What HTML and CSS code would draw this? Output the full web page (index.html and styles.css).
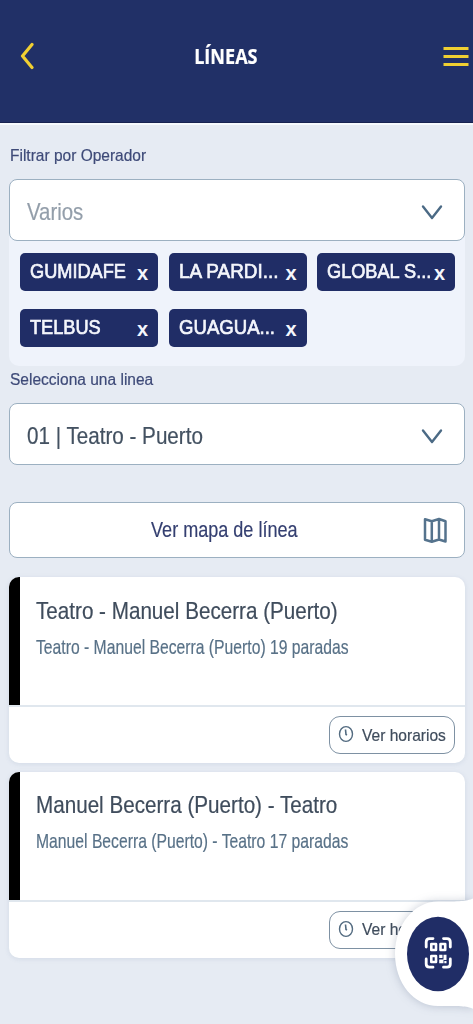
FILE: index.html
```html
<!DOCTYPE html>
<html lang="es">
<head>
<meta charset="utf-8">
<title>Líneas</title>
<link rel="stylesheet" href="styles.css">
</head>
<body>
<header class="header">
  <svg class="back" width="14" height="28" viewBox="0 0 14 28"><path d="M12 2.500 2.500 14 12 25.500" fill="none" stroke="#f0cf32" stroke-width="3.200" stroke-linecap="round" stroke-linejoin="round"/></svg>
  <h1 class="title"><span class="t t-head">LÍNEAS</span></h1>
  <svg class="menu" width="26" height="22" viewBox="0 0 26 22"><path d="M.5 3.500H25.500M.5 11.500H25.500M.5 19.500H25.500" stroke="#f0cf32" stroke-width="3.200"/></svg>
</header>
<main class="main">
  <div class="label"><span class="t t-filter">Filtrar por Operador</span></div>
  <div class="panel">
    <div class="select placeholder">
      <span class="t t-varios">Varios</span>
      <svg width="22" height="16" viewBox="0 0 22 16"><path d="M2 2.500 11 14 20 2.500" fill="none" stroke="#4b6a85" stroke-width="2.400" stroke-linecap="round" stroke-linejoin="round"/></svg>
    </div>
    <div class="chips">
      <div class="chip"><span class="t">GUMIDAFE</span><b>x</b></div>
      <div class="chip"><span class="t t-pardi">LA PARDI...</span><b>x</b></div>
      <div class="chip"><span class="t">GLOBAL S...</span><b>x</b></div>
      <div class="chip"><span class="t">TELBUS</span><b>x</b></div>
      <div class="chip"><span class="t t-guagua">GUAGUA...</span><b>x</b></div>
    </div>
  </div>
  <div class="label label-line"><span class="t t-line">Selecciona una linea</span></div>
  <div class="select">
    <span class="t t-route">01 | Teatro - Puerto</span>
    <svg width="22" height="16" viewBox="0 0 22 16"><path d="M2 2.500 11 14 20 2.500" fill="none" stroke="#4b6a85" stroke-width="2.400" stroke-linecap="round" stroke-linejoin="round"/></svg>
  </div>
  <div class="map-button">
    <span class="t t-map">Ver mapa de línea</span>
    <svg width="26" height="28" viewBox="0 0 26 28"><path d="M3 3.200 9.800 5.200 17 3 23.500 5.200V25.500L17 23.500 9.800 25.800 3 23.800ZM9.800 5.200V25.500M17 3.200V23.500" fill="none" stroke="#55738d" stroke-width="2.500" stroke-linejoin="round"/></svg>
  </div>
  <section class="card">
    <div class="card-body">
      <h2><span class="t t-name">Teatro - Manuel Becerra (Puerto)</span></h2>
      <p><span class="t t-sub">Teatro - Manuel Becerra (Puerto) 19 paradas</span></p>
    </div>
    <div class="card-foot">
      <div class="times">
        <svg width="16" height="18" viewBox="0 0 16 18"><ellipse cx="8" cy="9" rx="6.500" ry="7.400" fill="none" stroke="#536b80" stroke-width="1.400"/><path d="M7.500 4.500 8 9.500 9 10" fill="none" stroke="#536b80" stroke-width="1.600"/></svg>
        <span class="t t-times">Ver horarios</span>
      </div>
    </div>
  </section>
  <section class="card">
    <div class="card-body">
      <h2><span class="t t-name">Manuel Becerra (Puerto) - Teatro</span></h2>
      <p><span class="t t-sub">Manuel Becerra (Puerto) - Teatro 17 paradas</span></p>
    </div>
    <div class="card-foot">
      <div class="times">
        <svg width="16" height="18" viewBox="0 0 16 18"><ellipse cx="8" cy="9" rx="6.500" ry="7.400" fill="none" stroke="#536b80" stroke-width="1.400"/><path d="M7.500 4.500 8 9.500 9 10" fill="none" stroke="#536b80" stroke-width="1.600"/></svg>
        <span class="t t-times">Ver horarios</span>
      </div>
    </div>
  </section>
</main>
<svg class="fab" width="93" height="144" viewBox="380 880 93 144">
  <path d="M476 897C468 901 463 901.500 438 901.500C414 901.500 395 925 395 954C395 983 414 1006 438 1006C463 1006 468 1006 476 1010Z" fill="#fff"/>
  <ellipse cx="438" cy="954" rx="31" ry="37.300" fill="#202d66"/>
  <g fill="none" stroke="#fff" stroke-linejoin="round">
    <path stroke-width="2.800" stroke-linecap="round" d="M426.200 947V942Q426.200 938.600 429.500 938.600H433M443.500 938.600H447Q450.300 938.600 450.300 942V947M426.200 959V964Q426.200 967.200 429.500 967.200H433M443.500 967.200H447Q450.300 967.200 450.300 964V959"/>
    <path stroke-width="2.600" d="M431.300 944H436V950H431.300ZM440.500 944H445.200V950H440.500ZM431.300 956H436V962H431.300Z"/>
  </g>
  <path d="M439.200 954.700H442.500V958H439.200ZM443.500 954.700H446.500V960H443.500ZM439.200 959.500H443.500V963.200H439.200ZM444.300 961H446.500V963.200H444.300Z" fill="#fff"/>
</svg>
</body>
</html>
```
FILE: styles.css
```css
* { box-sizing: border-box; }
body {
  margin: 0;
  height: 1024px;
  overflow: hidden;
  background: #e6ebf3;
  color: #3f4c5c;
  font-family: "Liberation Sans", Arial, sans-serif;
}
h1, h2, p { margin: 0; font-weight: 400; }
.t {
  display: inline-block;
  white-space: nowrap;
  transform: scaleX(var(--fit, 1));
  transform-origin: left center;
  -webkit-text-stroke: .2px currentColor;
}
.header {
  display: grid;
  grid-template-columns: 70px 1fr 70px;
  align-items: center;
  height: 125px;
  padding: 0 4px 11px 20px;
  background: #213067;
  border-bottom: 2px solid #f6f9fd;
  box-shadow: inset 0 -1px #172250;
}
.menu { justify-self: end; }
.title {
  padding-right: 37px;
  text-align: center;
  color: #fff;
  font: 700 21px/28px "Open Sans", sans-serif;
}
.t-head { --fit: .86; transform-origin: center; }
.main { padding: 0 8px 0 9px; }
.label {
  height: 54px;
  padding: 21px 0 0 1px;
  font-size: 17px;
  line-height: 20px;
  color: #3e4a78;
}
.t-filter { --fit: .912; }
.label-line { height: 37px; padding-top: 4px; font-size: 16px; }
.t-line { --fit: .97; }
.panel { height: 187px; border-radius: 10px; background: #eff3fb; }
.select {
  display: flex;
  align-items: center;
  justify-content: space-between;
  height: 62px;
  padding: 3px 21px 0 17px;
  background: #fff;
  border: 1.5px solid #9cb0c1;
  border-radius: 8px;
  font-size: 24px;
  color: #435161;
}
.placeholder { color: #939eaa; }
.t-varios { --fit: .85; }
.t-route { --fit: .86; }
.chips {
  display: grid;
  grid-template-columns: repeat(3, 138px);
  gap: 18px 10.500px;
  padding: 12px 0 0 11px;
}
.chip {
  display: flex;
  justify-content: space-between;
  align-items: center;
  height: 38px;
  padding: 0 10px 2px 10px;
  border-radius: 5px;
  background: #202d66;
  color: #f4f6fc;
  font-size: 21px;
}
.chip .t { --fit: .865; width: 100px; -webkit-text-stroke: .7px #f4f6fc; }
.chip .t-pardi { --fit: .9; }
.chip .t-guagua { --fit: .885; }
.chip b { font-size: 20px; line-height: 20px; padding-top: 3px; }
.map-button {
  display: grid;
  grid-template-columns: 1fr 26px;
  align-items: center;
  height: 56px;
  margin: 37px 0 19px;
  padding: 0 16px 0 0;
  background: #fff;
  border: 1.5px solid #9cb0c1;
  border-radius: 8px;
  font-size: 22px;
  color: #343f70;
}
.t-map { --fit: .82; justify-self: center; margin-left: 16px; transform-origin: center; }
.card {
  height: 186px;
  margin-bottom: 8.500px;
  overflow: hidden;
  border-radius: 10px;
  background: #fff;
  box-shadow: 0 1px 5px rgba(90, 120, 155, .14);
}
.card-body {
  height: 128px;
  padding: 19.500px 0 0 16px;
  border-left: 11px solid #000;
}
.card-body h2 { font-size: 24px; line-height: 28px; }
.card-body p { padding-top: 9px; font-size: 21px; line-height: 26px; color: #587187; }
.t-name { --fit: .86; }
.t-sub { --fit: .748; }
.card-foot {
  display: flex;
  justify-content: flex-end;
  height: 58px;
  padding: 9px 10px 0 0;
  border-top: 2px solid #e0e7ee;
}
.times {
  display: flex;
  align-items: center;
  gap: 8px;
  width: 126px;
  height: 38px;
  padding: 0 0 2px 8px;
  border: 1.5px solid #7e91a3;
  border-radius: 11px;
  font-size: 17px;
}
.t-times { --fit: .915; padding-top: 3px; }
.fab {
  position: absolute;
  right: 0;
  bottom: 0;
  filter: drop-shadow(0 0 5px rgba(60, 80, 110, .28));
}
```
